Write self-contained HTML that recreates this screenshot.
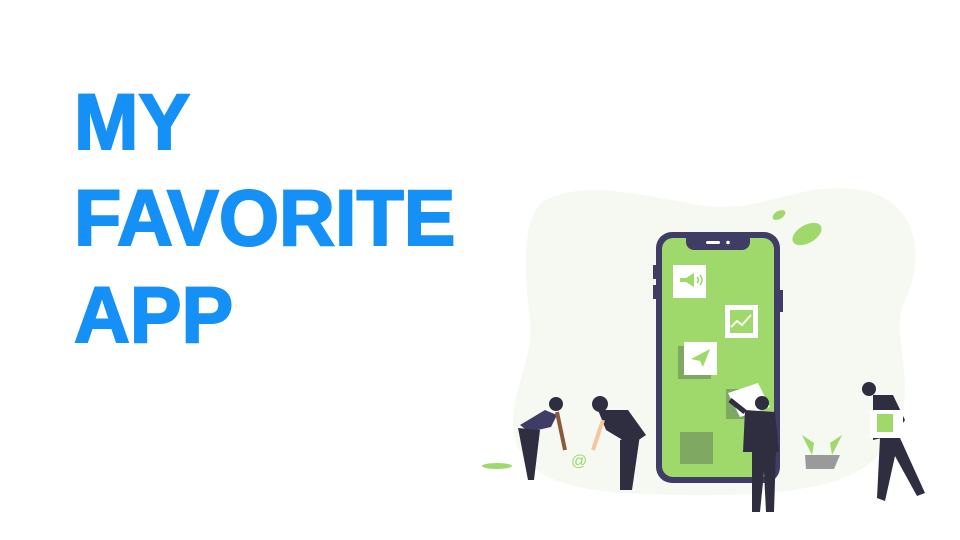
<!DOCTYPE html>
<html><head><meta charset="utf-8"><style>
body{margin:0;width:960px;height:540px;background:#fff;overflow:hidden;position:relative;font-family:"Liberation Sans",sans-serif}
.t{position:absolute;left:74px;color:#1490f7;font-weight:bold;font-size:79px;line-height:1;letter-spacing:0px;-webkit-text-stroke:2px #1490f7;transform:scaleX(0.98);transform-origin:left}
</style></head><body>
<div class="t" style="top:82px">MY</div>
<div class="t" style="top:178px">FAVORITE</div>
<div class="t" style="top:275px">APP</div>
<svg width="960" height="540" style="position:absolute;left:0;top:0">
<path d="M545 200 C585 180 640 195 700 205 C760 215 800 180 860 190 C920 200 925 260 905 300 C890 330 915 380 900 420 C880 480 820 495 700 495 C600 495 530 490 515 440 C505 400 535 360 530 320 C525 280 520 215 545 200Z" fill="#f6f9f1"/>
<rect x="656" y="232" width="124" height="251" rx="16" fill="#3f3d66"/>
<rect x="662" y="238" width="112" height="239" rx="11" fill="#9fd86b"/>
<path d="M686 238 h64 v4 a8 8 0 0 1 -8 8 h-48 a8 8 0 0 1 -8 -8z" fill="#3f3d66"/>
<rect x="706" y="241" width="14" height="3" rx="1.5" fill="#fff"/><circle cx="728" cy="242.5" r="1.8" fill="#fff"/>
<rect x="653" y="265" width="3" height="14" fill="#3f3d66"/><rect x="653" y="285" width="3" height="14" fill="#3f3d66"/><rect x="780" y="290" width="3" height="22" fill="#3f3d66"/>
<rect x="673" y="265" width="33" height="33" fill="#fff"/>
<path d="M680 278 h6 l8 -5 v14 l-8 -5 h-6z" fill="#9fd86b"/><path d="M697 277 q3 3 0 6 M700 275 q4 5 0 10" stroke="#9fd86b" fill="none" stroke-width="1.5"/>
<rect x="725" y="305" width="33" height="33" fill="#fff"/>
<rect x="730" y="310" width="23" height="23" fill="#9fd86b"/><path d="M731 327 l6 -6 l5 4 l9 -10" stroke="#fff" stroke-width="2" fill="none"/>
<rect x="678" y="346" width="33" height="33" fill="#7fa862"/>
<rect x="684" y="342" width="33" height="33" fill="#fff"/>
<path d="M691 359 l19 -10 l-7 18 l-3 -6z" fill="#9fd86b"/>
<rect x="680" y="432" width="33" height="32" fill="#7fa862"/>
<rect x="726" y="389" width="20" height="30" fill="#7fa862"/>
<path d="M728 393 l30 -10 l12 24 l-30 10z" fill="#fff"/>
<ellipse cx="807" cy="234" rx="16" ry="9" transform="rotate(-30 807 234)" fill="#9fd86b"/>
<ellipse cx="779" cy="215" rx="7" ry="4" transform="rotate(-30 779 215)" fill="#9fd86b"/>
<path d="M805 455 l35 0 l-6 14 l-28 0z" fill="#9a9a9a"/>
<path d="M812 455 l-10 -20 l12 8z M832 455 l10 -20 l-12 8z" fill="#9fd86b"/>
<ellipse cx="497" cy="466" rx="15" ry="3" fill="#9fd86b"/>
<circle cx="556" cy="404" r="7" fill="#2f2e41"/>
<path d="M520 425 l25 -15 l12 5 l-6 12 l-22 5z" fill="#3f3d66"/>
<path d="M518 428 l22 2 l-6 50 l-6 0z" fill="#2f2e41"/>
<path d="M557 412 l8 38" stroke="#8b5a3c" stroke-width="4"/>
<circle cx="600" cy="404" r="8" fill="#2f2e41"/>
<path d="M598 410 l30 0 l18 25 l-15 10 l-25 -15z" fill="#2f2e41"/>
<path d="M620 440 l20 -5 l-8 55 l-12 0z" fill="#2f2e41"/>
<path d="M603 420 l-10 30" stroke="#f5c5a0" stroke-width="4"/>
<text x="571" y="466" font-size="16" fill="#9fd86b" font-family="Liberation Sans">@</text>
<circle cx="762" cy="403" r="7" fill="#2f2e41"/>
<path d="M745 410 l30 2 l4 40 l-36 0z" fill="#2f2e41"/>
<path d="M752 450 h24 l-2 62 h-8 l-2 -40 l-4 40 h-8z" fill="#2f2e41"/>
<path d="M745 412 l-15 -12" stroke="#2f2e41" stroke-width="5"/>
<circle cx="869" cy="389" r="7" fill="#2f2e41"/>
<path d="M873 395 l20 0 l12 25 l-10 15 l-22 5z" fill="#2f2e41"/>
<path d="M880 438 l20 0 l25 55 l-8 3 l-22 -40 l-10 45 l-8 -3z" fill="#2f2e41"/>
<rect x="870" y="410" width="33" height="28" fill="#fff"/>
<rect x="877" y="414" width="16" height="18" fill="#9fd86b"/>
</svg>
</body></html>
